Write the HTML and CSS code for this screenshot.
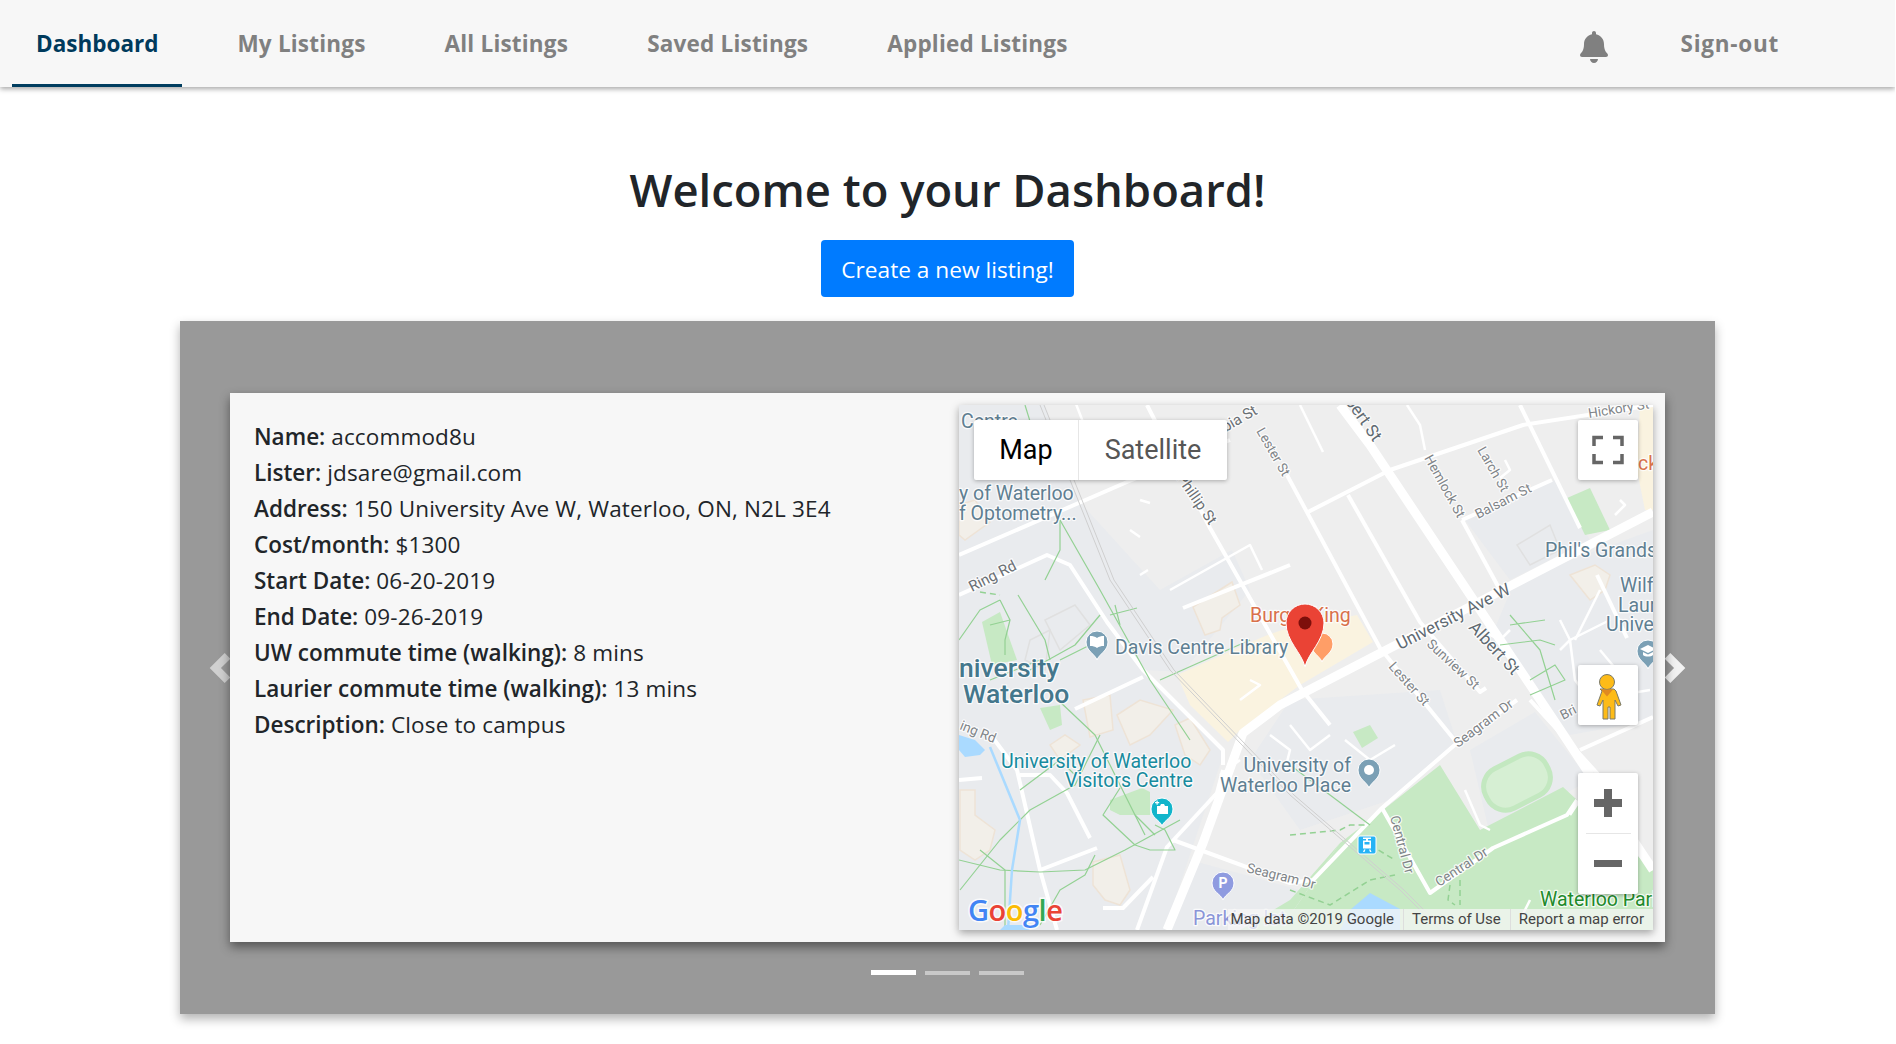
FILE: index.html
```html
<!DOCTYPE html>
<html lang="en">
<head>
<meta charset="utf-8">
<title>Dashboard</title>
<link rel="stylesheet" href="styles.css">
</head>
<body>
<nav class="navbar">
  <a class="nav-item active">Dashboard</a>
  <a class="nav-item">My Listings</a>
  <a class="nav-item">All Listings</a>
  <a class="nav-item">Saved Listings</a>
  <a class="nav-item">Applied Listings</a>
  <span class="nav-spacer"></span>
  <svg class="bell" viewBox="0 0 448 512"><path d="M224 512c35.32 0 63.97-28.65 63.97-64H160.03c0 35.35 28.65 64 63.97 64zm215.39-149.71c-19.32-20.76-55.47-51.99-55.47-154.29 0-77.7-54.48-139.9-127.94-155.16V32c0-17.67-14.32-32-31.98-32s-31.98 14.33-31.98 32v20.84C118.56 68.1 64.08 130.3 64.08 208c0 102.3-36.15 133.53-55.47 154.29-6 6.45-8.66 14.16-8.61 21.71.11 16.4 12.98 32 32.1 32h383.8c19.12 0 32-15.6 32.1-32 .05-7.55-2.61-15.27-8.61-21.71z"/></svg>
  <a class="nav-item signout">Sign-out</a>
</nav>
<main class="main">
  <h1 class="title">Welcome to your Dashboard!</h1>
  <button class="btn-create">Create a new listing!</button>
  <section class="carousel">
    <svg class="chev chev-left" viewBox="0 0 8 8"><path d="M5.25 0l-4 4 4 4 1.5-1.5-2.5-2.5 2.5-2.5-1.5-1.5z"/></svg>
    <svg class="chev chev-right" viewBox="0 0 8 8"><path d="M2.75 0l-1.5 1.5 2.5 2.5-2.5 2.5 1.5 1.5 4-4-4-4z"/></svg>
    <article class="card">
      <div class="details">
        <p><strong>Name:</strong> accommod8u</p>
        <p><strong>Lister:</strong> jdsare@gmail.com</p>
        <p><strong>Address:</strong> 150 University Ave W, Waterloo, ON, N2L 3E4</p>
        <p><strong>Cost/month:</strong> $1300</p>
        <p><strong>Start Date:</strong> 06-20-2019</p>
        <p><strong>End Date:</strong> 09-26-2019</p>
        <p><strong>UW commute time (walking):</strong> 8 mins</p>
        <p><strong>Laurier commute time (walking):</strong> 13 mins</p>
        <p><strong>Description:</strong> Close to campus</p>
      </div>
      <div class="map">
        <svg class="map-canvas" viewBox="959 405 694 525">
          <rect class="land" x="959" y="405" width="694" height="525"/>
          <polygon class="campus" points="959,405 1045,405 1078,500 1160,590 1232,550 1250,590 1183,672 1143,670 1225,750 1165,930 959,930"/>
          <polygon class="campus" points="1515,580 1653,530 1653,720 1570,735 1530,690 1490,640"/>
          <polygon class="campus" points="1465,520 1555,480 1590,540 1510,580"/>
          <polygon class="campus" points="1290,700 1440,690 1457,743 1390,800 1300,830 1250,760"/>
          <polygon class="campus" points="1470,750 1535,712 1590,780 1490,835"/>
          <polygon class="campus" points="1190,860 1300,890 1290,930 1170,930"/>
          <polygon class="cream" points="1177,675 1265,636 1282,630 1357,615 1373,642 1300,685 1240,730 1228,742 1190,705"/>
          <polygon class="cream" points="1640,405 1653,405 1653,510 1645,510 1637,470"/>
          <polygon class="park" points="1280,930 1340,843 1383,810 1440,765 1480,830 1563,787 1653,870 1653,930"/>
          <polygon class="park" points="1240,930 1280,930 1340,843 1290,900"/>
          <polygon class="park" points="1110,800 1142,788 1150,792 1150,815 1120,815 1110,810"/>
          <polygon class="park" points="982,622 1000,612 1017,660 992,665"/>
          <polygon class="park" points="1040,708 1060,705 1062,725 1050,730"/>
          <polygon class="park" points="1567,498 1590,488 1610,530 1585,535"/>
          <polygon class="park" points="1353,732 1370,725 1378,738 1362,748"/>
          <g class="track"><rect x="1483" y="760" width="68" height="44" rx="20" transform="rotate(-27 1517 782)"/></g>
          <g class="buildings">
            <polygon points="959,505 975,500 990,522 965,540 959,535"/>
            <polygon points="1193,607 1232,582 1240,605 1222,618 1220,630 1205,635"/>
            <polygon points="1050,745 1065,735 1080,745 1060,760"/>
            <polygon points="1083,700 1110,695 1113,730 1090,737"/>
            <polygon points="1117,715 1140,700 1173,710 1150,735 1130,745"/>
            <polygon points="1175,725 1190,718 1210,750 1200,765 1185,755"/>
            <polygon points="960,790 975,790 975,815 995,830 990,850 975,860 960,850"/>
            <polygon points="1093,862 1120,855 1130,890 1120,905 1105,900 1093,885"/>
            <polygon points="1570,575 1595,565 1610,575 1605,590 1590,600"/>
            <polygon class="grey" points="1045,620 1075,605 1090,625 1060,650"/>
            <polygon class="grey" points="1050,630 1030,640 1025,660 1045,670"/>
            <polygon class="grey" points="1517,545 1550,525 1560,550 1530,565"/>
          </g>
          <g class="roads-major">
            <path d="M1340 405L1370 445L1557 725L1653 870"/>
            <path d="M1653 512L1280 705L1243 733L1203 843L1167 930"/>
          </g>
          <g class="roads-mid">
            <path d="M959 555L1127 482L1230 440"/>
            <path d="M1147 405L1210 528L1302 690L1330 725"/>
            <path d="M1308 512L1390 470L1523 425L1653 405"/>
            <path d="M1287 475L1380 648L1457 743"/>
            <path d="M1348 495L1420 622L1480 692L1486 688"/>
            <path d="M959 595L1047 555L1070 565L1107 622L1143 670L1223 750L1223 765"/>
            <path d="M993 738L1017 770L1040 870L1057 930"/>
            <path d="M1173 840L1290 883L1313 880L1382 808L1457 743L1517 700"/>
            <path d="M1520 405L1580 528"/>
            <path d="M1597 575L1627 638"/>
            <path d="M1462 520L1500 590"/>
            <path d="M1462 520L1552 480"/>
            <path d="M1382 808L1430 893L1493 848L1567 815L1577 800"/>
            <path d="M1530 700L1597 773L1653 870"/>
            <path d="M1183 608L1290 565"/>
            <path d="M1580 750L1653 717"/>
            <path d="M1075 709L1143 677"/>
            <path d="M959 780L982 778"/>
            <path d="M1020 775L1050 775L1067 793L1090 838"/>
            <path d="M1040 870L1097 848"/>
            <path d="M1137 930L1167 847L1217 793L1223 770"/>
            <path d="M1103 908L1123 908L1153 877"/>
          </g>
          <g class="roads-thin">
            <path d="M1300 405L1323 452"/>
            <path d="M1076 404L1090 440"/>
            <path d="M1407 405L1420 425L1425 450"/>
            <path d="M1140 500L1150 503M1190 500L1200 495M1130 530L1140 537M1140 575L1148 570"/>
            <path d="M1170 590L1250 545L1262 570"/>
            <path d="M1505 460L1510 470L1500 478"/>
            <path d="M1620 500L1625 505L1615 515"/>
            <path d="M1575 640L1600 590"/>
            <path d="M1560 620L1570 640L1560 650M1570 640L1610 620"/>
            <path d="M1570 640L1575 680L1590 700L1650 690M1600 650L1625 680L1600 710"/>
            <path d="M1480 630L1500 640L1510 630"/>
            <path d="M1345 740L1370 760L1395 745"/>
            <path d="M1290 725L1310 750L1330 735"/>
            <path d="M1465 790L1480 825L1490 830"/>
            <path d="M1570 815L1580 800L1590 795"/>
            <path d="M1520 920L1530 900"/>
            <path d="M1240 700L1260 685L1250 680"/>
            <path d="M1270 735L1290 750L1285 770"/>
            <path d="M1220 775L1240 760"/>
          </g>
          <g class="walk">
            <path d="M1025 405L1045 470"/>
            <path d="M1060 520L1060 550L1045 580"/>
            <path d="M1060 520L1100 590L1150 680L1190 740"/>
            <path d="M1115 605L1120 625M1110 615L1137 608"/>
            <path d="M1018 595L1045 640L1050 660"/>
            <path d="M990 625L1010 620L1005 640L1005 655"/>
            <path d="M959 640L980 610L1000 600M1000 600L1010 620"/>
            <path d="M1160 680L1250 640"/>
            <path d="M1030 670L1075 645L1100 615"/>
            <path d="M990 680L1040 660M1060 660L1090 645"/>
            <path d="M1058 700L1095 735L1120 785L1145 835"/>
            <path d="M1020 790L1060 760L1075 775"/>
            <path d="M1100 735L1075 785L1030 810L1000 840L960 890"/>
            <path d="M959 860L1000 870L1040 872L1085 870L1125 850L1180 820"/>
            <path d="M1095 855L1085 875L1060 890L1040 925"/>
            <path d="M1120 788L1103 815L1135 845L1150 850L1175 850L1165 830L1155 825"/>
            <path d="M1135 815L1155 835"/>
            <path d="M980 850L1005 870L1005 930"/>
            <path d="M1510 615L1540 650L1555 700M1545 620L1510 625M1500 645L1540 640L1555 645M1530 680L1555 665L1565 680L1530 695"/>
            <path d="M1290 765L1370 825"/>
          </g>
          <g class="walk dashed">
            <path d="M1290 835L1340 830L1350 825L1368 825"/>
            <path d="M1370 845L1395 860"/>
            <path d="M1290 890L1330 905L1370 880L1395 875"/>
            <path d="M1450 885L1448 900L1455 905M1460 880L1460 905"/>
            <path d="M980 592L1000 595"/>
          </g>
          <g class="rail">
            <path d="M1040 405L1070 480L1110 580L1170 670L1290 795L1400 890L1440 930"/>
            <path d="M1044 405L1074 480L1114 580L1174 670L1294 795L1404 890L1444 930"/>
          </g>
          <g class="water">
            <polygon points="959,735 975,740 985,750 980,755 965,757 959,750"/>
            <path class="river" d="M990 747L1020 820L1012 870L1008 930"/>
            <polygon points="1005,925 1025,925 1030,930 1000,930"/>
            <polygon points="1350,910 1370,893 1400,909 1400,930 1340,930"/>
          </g>
          <text class="lbl poi" x="961" y="428">Centre</text>
          <text class="lbl poi" x="959" y="500">y of Waterloo</text>
          <text class="lbl poi" x="959" y="520">f Optometry...</text>
          <text class="lbl poi" x="1115" y="654">Davis Centre Library</text>
          <text class="lbl area" x="959" y="677">niversity</text>
          <text class="lbl area" x="963" y="703">Waterloo</text>
          <text class="lbl teal" x="1001" y="768">University of Waterloo</text>
          <text class="lbl teal" x="1065" y="787">Visitors Centre</text>
          <text class="lbl poi anchor-end" x="1351" y="772">University of</text>
          <text class="lbl poi anchor-end" x="1351" y="792">Waterloo Place</text>
          <text class="lbl poi" x="1545" y="557">Phil's Grands</text>
          <text class="lbl poi" x="1620" y="592">Wilf</text>
          <text class="lbl poi" x="1618" y="612">Laur</text>
          <text class="lbl poi" x="1606" y="631">Unive</text>
          <text class="lbl food" x="1250" y="622">Burger King</text>
          <text class="lbl food" x="1638" y="470">ck</text>
          <text class="lbl parkname" x="1540" y="906">Waterloo Park</text>
          <text class="lbl parking" x="1193" y="925">Parking lot</text>
          <text class="lbl road-lg" transform="translate(1400 650) rotate(-27)">University Ave W</text>
          <text class="lbl road-lg" transform="translate(1468 628) rotate(47)">Albert St</text>
          <text class="lbl road-lg" transform="translate(1336 389) rotate(55)">Albert St</text>
          <text class="lbl road-md" transform="translate(1176 478) rotate(55)">Phillip St</text>
          <text class="lbl road-sm" transform="translate(1424 458) rotate(61)">Hemlock St</text>
          <text class="lbl road-sm" transform="translate(1477 450) rotate(60)">Larch St</text>
          <text class="lbl road-sm" transform="translate(1478 519) rotate(-27)">Balsam St</text>
          <text class="lbl road-sm" transform="translate(1589 418) rotate(-9)">Hickory St</text>
          <text class="lbl road-sm" transform="translate(1426 645) rotate(43)">Sunview St</text>
          <text class="lbl road-sm" transform="translate(1388 667) rotate(48)">Lester St</text>
          <text class="lbl road-sm" transform="translate(1256 431) rotate(60)">Lester St</text>
          <text class="lbl road-md" transform="translate(1188 454) rotate(-30)">Columbia St</text>
          <text class="lbl road-md" transform="translate(972 592) rotate(-27)">Ring Rd</text>
          <text class="lbl road-sm" transform="translate(959 729) rotate(22)">ing Rd</text>
          <text class="lbl road-sm" transform="translate(1246 872) rotate(14)">Seagram Dr</text>
          <text class="lbl road-sm" transform="translate(1458 748) rotate(-37)">Seagram Dr</text>
          <text class="lbl road-sm" transform="translate(1390 817) rotate(75)">Central Dr</text>
          <text class="lbl road-sm" transform="translate(1439 887) rotate(-33)">Central Dr</text>
          <text class="lbl road-sm" transform="translate(1563 720) rotate(-27)">Bri</text>
          <path class="pin pin-blue" d="M1097 660c-2-6-11-9-11-18a11 11 0 0 1 22 0c0 9-9 12-11 18z"/>
          <path class="glyph-white" d="M1090 636c3 0 5 .5 7 2 2-1.500 4-2 7-2v10c-3 0-5 .5-7 2-2-1.500-4-2-7-2z"/>
          <path class="pin pin-blue" d="M1369 788c-2-6-11-9-11-18a11 11 0 0 1 22 0c0 9-9 12-11 18z"/>
          <circle class="glyph-white" cx="1369" cy="770" r="5"/>
          <path class="pin pin-blue" d="M1648 669c-2-6-11-9-11-18a11 11 0 0 1 22 0c0 9-9 12-11 18z"/>
          <path class="glyph-white" d="M1648 645l8 4-8 4-8-4zM1643 652v3c2 2 8 2 10 0v-3l-5 2.500z"/>
          <path class="pin pin-teal" d="M1162 826c-2-6-11-8-11-17a11 11 0 0 1 22 0c0 9-9 11-11 17z"/>
          <path class="glyph-white" d="M1157 806h3l1-2h3l1 2h3v8h-11zM1155 802h1.500v-1.500h1.200v1.500h1.500v1.200h-1.500v1.500h-1.200v-1.500H1155z"/>
          <path class="pin pin-purple" d="M1223 900c-2-6-11-8-11-17a11 11 0 0 1 22 0c0 9-9 11-11 17z"/>
          <text class="pin-p" x="1223" y="888">P</text>
          <rect class="transit" x="1358" y="836" width="18" height="18" rx="2"/>
          <path class="glyph-white" d="M1363 837.500h8v1.500h-3v1.500h3v8h-8v-8h3v-1.500h-3zM1364.500 842v2.500h5V842zM1364 849.500h1.500l-1 2.500H1363zM1369 849.500h1.500l1 2.500h-1.500z"/>
          <path class="pin pin-orange" d="M1322 662c-2-6-11-9-11-18a11 11 0 0 1 22 0c0 9-9 12-11 18z"/>
          <path class="pin-red" d="M1305 667c-3-14-19-26-19-44a19 19 0 0 1 38 0c0 18-16 30-19 44z"/>
          <circle class="pin-dot" cx="1305" cy="623" r="6.500"/>
          <text class="google" x="968" y="921"><tspan class="g-blue">G</tspan><tspan class="g-red">o</tspan><tspan class="g-yellow">o</tspan><tspan class="g-blue">g</tspan><tspan class="g-green">l</tspan><tspan class="g-red">e</tspan></text>
        </svg>
        <div class="map-type">
          <span class="mt-btn mt-map">Map</span>
          <span class="mt-btn mt-sat">Satellite</span>
        </div>
        <div class="ctl ctl-full">
          <svg class="ctl-icon" viewBox="0 0 60 60"><path d="M16 26V17.500H25M35 17.500H44V26M44 34V42.500H35M25 42.500H16V34"/></svg>
        </div>
        <div class="ctl ctl-peg">
          <svg class="ctl-peg-icon" viewBox="0 0 60 60"><path class="peg-body" d="M22 24h14l2 2 5 14-3 1-3-6v19h-5V42h-2v12h-5V35l-3 6-3-1 5-14z"/><circle class="peg-body" cx="29" cy="17" r="7.500"/><path class="peg-collar" d="M23 24.500h12l-6 7z"/></svg>
        </div>
        <div class="ctl ctl-zoom">
          <svg class="ctl-zoom-icon" viewBox="0 0 60 121"><path d="M26 16h8v10h10v8H34v10h-8V34H16v-8h10zM16 87h28v7H16z"/></svg>
          <span class="zoom-div"></span>
        </div>
        <div class="attrib">
          <span class="attr-cell">Map data ©2019 Google</span>
          <span class="attr-cell">Terms of Use</span>
          <span class="attr-cell">Report a map error</span>
        </div>
      </div>
    </article>
    <div class="indicators">
      <span class="dot on"></span>
      <span class="dot"></span>
      <span class="dot"></span>
    </div>
  </section>
</main>
</body>
</html>
```

FILE: styles.css
```css
* { box-sizing: border-box; }
html, body { margin: 0; padding: 0; height: 100%; overflow: hidden; }
body { width: 1895px; background: #fff; color: #212529; font-family: "Open Sans", "Noto Sans", sans-serif; font-size: 22.5px; line-height: 36px; }

.navbar { display: flex; align-items: stretch; height: 87px; padding-left: 12px; background: #f7f7f7; box-shadow: 0 2px 5px rgba(0,0,0,.35); position: relative; z-index: 2; }
.nav-item { display: flex; align-items: center; height: 87px; padding: 1px 24px 0; margin-right: 31px; color: #808080; font-weight: 700; letter-spacing: .2px; white-space: nowrap; }
.nav-item.active { color: #003a5c; border-bottom: 3px solid #003d5f; padding-top: 3px; letter-spacing: 0; }
.nav-spacer { flex: 1; }
.bell { width: 28px; height: 32px; margin: 31px 73px 0 0; fill: #808080; }
.nav-item.signout { margin-right: 116px; padding: 1px 0 0; letter-spacing: .75px; }

.main { display: flex; flex-direction: column; align-items: center; }
.title { margin: 74px 0 0; font-size: 45.4px; line-height: 56px; font-weight: 600; text-align: center; }
.btn-create { margin-top: 23px; width: 253px; height: 57px; padding: 3px 0 0; background: #007bff; border: 0; border-radius: 4px; color: #fff; font: inherit; font-size: 22.7px; }

.carousel { position: relative; width: 1535px; height: 693px; margin-top: 24px; padding: 72px 50px; background: #999; box-shadow: 0 5px 10px rgba(0,0,0,.3); }
.chev { position: absolute; top: 332px; width: 30px; height: 30px; }
.chev-left { left: 25px; fill: #d0d0d0; }
.chev-right { right: 25px; fill: #f2f2f2; }

.card { position: relative; display: flex; justify-content: space-between; height: 549px; padding: 12px 12px 12px 24px; background: #f7f7f7; box-shadow: 0 5px 10px rgba(0,0,0,.45); }
.details { padding-top: 14px; letter-spacing: .15px; }
.details p { margin: 0; white-space: nowrap; }
.details strong { font-weight: 600; letter-spacing: 0; }

.map { position: relative; width: 694px; height: 525px; overflow: hidden; box-shadow: 0 3px 8px rgba(0,0,0,.35); }
.map-canvas { display: block; width: 694px; height: 525px; }
.land { fill: #eeeeee; }
.campus { fill: #e9ebee; }
.cream { fill: #faf3e0; }
.park { fill: #c7e9c4; }
.track rect { fill: #d6efd3; stroke: #c3e8c0; stroke-width: 5; }
.buildings polygon { fill: #f2efe9; stroke: #eee3d6; stroke-width: 1.5; }
.buildings polygon.grey { fill: #e9ebee; stroke: #e0e0e0; }
.roads-major path, .roads-mid path, .roads-thin path, .walk path, .rail path, .river { fill: none; stroke-linejoin: round; }
.roads-major path { stroke: #fff; stroke-width: 9; }
.roads-mid path { stroke: #fff; stroke-width: 4; }
.roads-thin path { stroke: #fff; stroke-width: 2.5; }
.walk path { stroke: #93d193; stroke-width: 1.2; }
.walk.dashed path { stroke-dasharray: 6 4; stroke-width: 1.5; }
.rail path { stroke: #cfcfcf; stroke-width: 1; }
.water polygon { fill: #aadaff; }
.river { stroke: #aadaff; stroke-width: 2.5; }

.lbl { font-family: "Roboto", sans-serif; paint-order: stroke; stroke: #fff; stroke-opacity: .8; stroke-width: 2.5px; stroke-linejoin: round; }
.poi { font-size: 19.5px; fill: #5f7f92; }
.area { font-size: 26.5px; font-weight: 500; fill: #44778c; }
.teal { font-size: 19.5px; fill: #188b9e; }
.food { font-size: 19.5px; fill: #d9714b; }
.parkname { font-size: 19.5px; fill: #1f8a2c; }
.parking { font-size: 19.5px; fill: #8a95d8; }
.road-lg { font-size: 17px; fill: #5f6a72; }
.road-md { font-size: 15px; fill: #6a6f74; }
.road-sm { font-size: 13.5px; fill: #7f8488; }
.anchor-end { text-anchor: end; }
.pin { stroke: #fff; stroke-width: 1; }
.pin-blue { fill: #7ba0b5; }
.pin-teal { fill: #12b5cb; }
.pin-purple { fill: #8f9be0; }
.pin-orange { fill: #ff9e67; }
.pin-red { fill: #ea4335; stroke: #fff; stroke-width: 1; }
.pin-dot { fill: #7d0f0b; }
.glyph-white { fill: #fff; }
.pin-p { fill: #fff; font-family: "Roboto", sans-serif; font-size: 14px; font-weight: 700; text-anchor: middle; }
.transit { fill: #26b3f5; stroke: #fff; stroke-width: 1; }
.google { font-family: "Open Sans", sans-serif; font-size: 29px; font-weight: 600; paint-order: stroke; stroke: #fff; stroke-opacity: .8; stroke-width: 3px; letter-spacing: -.5px; }
.g-blue { fill: #4285f4; }
.g-red { fill: #ea4335; }
.g-yellow { fill: #fbbc05; }
.g-green { fill: #34a853; }

.map-type { position: absolute; left: 15px; top: 15px; display: flex; height: 60px; border-radius: 2px; background: #fff; box-shadow: 0 1px 4px rgba(0,0,0,.3); font-family: "Roboto", sans-serif; font-size: 27px; line-height: 60px; }
.mt-btn { display: block; text-align: center; }
.mt-map { width: 105px; color: #000; border-right: 1px solid #e6e6e6; }
.mt-sat { width: 148px; color: #565656; }

.ctl { position: absolute; left: 619px; width: 60px; background: #fff; border-radius: 2px; box-shadow: 0 1px 4px rgba(0,0,0,.3); }
.ctl svg { display: block; }
.ctl-full { top: 15px; height: 60px; }
.ctl-peg { top: 260px; height: 60px; }
.ctl-zoom { top: 368px; height: 121px; }
.ctl-icon { width: 60px; height: 60px; fill: none; stroke: #666; stroke-width: 3.5; }
.ctl-peg-icon { width: 60px; height: 60px; }
.peg-body { fill: #fdbb18; stroke: #7a7a6a; stroke-width: 1; }
.peg-collar { fill: #e08a20; }
.ctl-zoom-icon { width: 60px; height: 121px; fill: #666; }
.zoom-div { position: absolute; left: 8px; right: 7px; top: 60px; height: 1px; background: #e6e6e6; }

.attrib { position: absolute; right: 0; bottom: 0; display: flex; height: 21px; background: rgba(245,245,245,.75); font-family: "Roboto", sans-serif; font-size: 15px; line-height: 21px; color: #444; }
.attr-cell { padding: 0 9px 0 8px; white-space: nowrap; border-left: 1px solid rgba(220,220,220,.9); }
.attr-cell:first-child { border-left: 0; padding-left: 3px; }

.indicators { position: absolute; left: 691px; top: 649px; display: flex; gap: 9px; align-items: flex-end; }
.dot { width: 45px; height: 4px; background: #c9c9c9; }
.dot.on { height: 5px; background: #fff; }
```
